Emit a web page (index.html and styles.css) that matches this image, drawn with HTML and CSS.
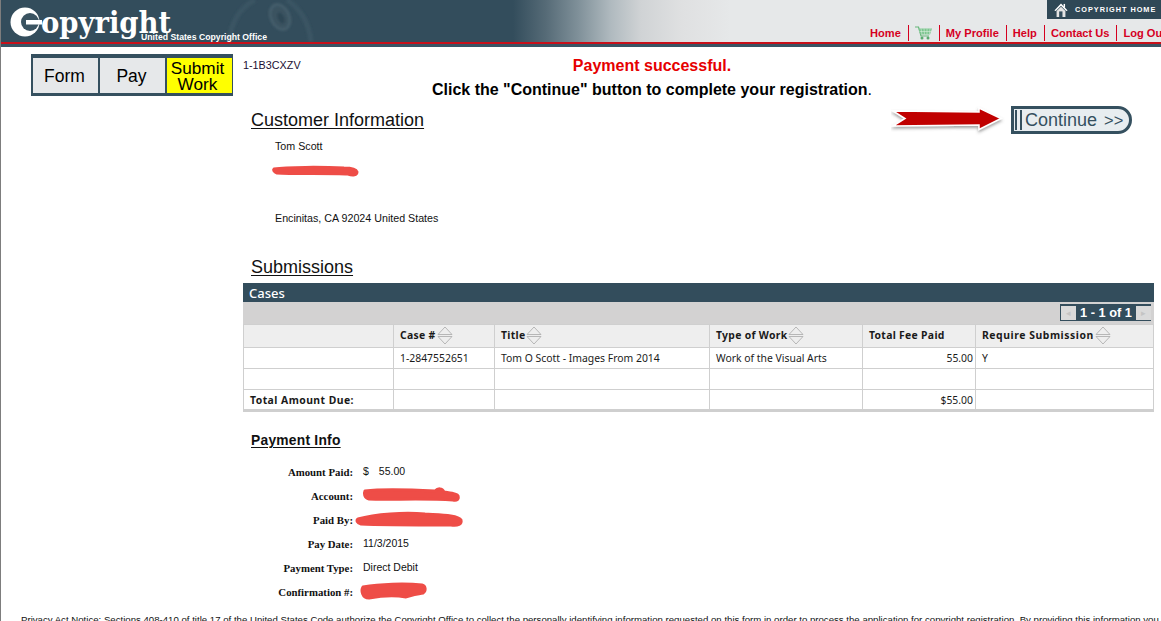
FILE: index.html
```html
<!DOCTYPE html>
<html lang="en">
<head>
<meta charset="utf-8">
<title>Copyright Registration</title>
<link rel="stylesheet" href="styles.css">
</head>
<body>
<header class="site-header">
  <div class="header-band">
    <svg class="ornament" width="90" height="42" viewBox="0 0 90 42" aria-hidden="true">
      <defs><filter id="soft"><feGaussianBlur stdDeviation="1"/></filter></defs>
      <g filter="url(#soft)">
        <path d="M4 42C6 24 14 8 30 0M62 0C74 8 84 22 86 42" fill="none" stroke="#3b5563" stroke-width="5"/>
        <ellipse cx="55" cy="17" rx="9" ry="13" fill="#3a5361" stroke="#445d6b" stroke-width="3" transform="rotate(-25 55 17)"/>
        <ellipse cx="56" cy="18" rx="3" ry="6" fill="#2f4755" transform="rotate(-25 56 18)"/>
      </g>
    </svg>
    <div class="brand">
      <div class="brand-mark">
        <svg class="brand-c" width="32" height="30" viewBox="0 0 32 30" role="img" aria-label="C">
          <circle cx="15" cy="15" r="14.5" fill="#fff"/>
          <circle cx="20" cy="15" r="9" fill="#3a5361"/>
          <rect x="16" y="13" width="16" height="4.5" fill="#fff"/>
        </svg>
        <span class="brand-word">opyright</span>
      </div>
      <div class="brand-sub">United States Copyright Office</div>
    </div>
    <div class="header-tools">
      <a class="home-box">
        <svg width="14" height="14" viewBox="0 0 19 15" preserveAspectRatio="none" aria-hidden="true">
          <path d="M0.5 8L9.5 0.5L18.5 8L16.5 8.5L9.5 3L2.5 8.5Z" fill="#fff"/>
          <path d="M3.5 8.5L9.5 4L15.5 8.5V15H3.5Z" fill="#e4e4e4"/>
          <rect x="7" y="9" width="4.5" height="6" fill="#334d5c"/>
          <rect x="13" y="1" width="2" height="4" fill="#fff"/>
        </svg>
        <span>COPYRIGHT HOME</span>
      </a>
      <nav class="top-nav">
        <a class="nav-item">Home</a>
        <a class="nav-item cart" aria-label="Cart">
          <svg width="17" height="14" viewBox="0 0 17 14" aria-hidden="true">
            <path d="M0 1H3.5L6 10H14" fill="none" stroke="#66b67a" stroke-width="1.2"/>
            <path d="M3.5 2.5H17L15 8.5H5.5Z" fill="#7cc58f"/>
            <path d="M6 2.5L7 8.5M9 2.5L9.5 8.5M12 2.5L12 8.5M15 2.5L14.5 8.5M4.5 5.5H16" stroke="#d6efdc" stroke-width=".6"/>
            <circle cx="7" cy="12" r="1.5" fill="#58ab6e"/>
            <circle cx="13" cy="12" r="1.5" fill="#58ab6e"/>
          </svg>
        </a>
        <a class="nav-item">My Profile</a>
        <a class="nav-item">Help</a>
        <a class="nav-item">Contact Us</a>
        <a class="nav-item">Log Out</a>
      </nav>
    </div>
  </div>
  <div class="header-rule"></div>
  <div class="header-strip"></div>
</header>

<div class="layout">
  <aside class="sidebar">
    <div class="tabs">
      <div class="tab">Form</div>
      <div class="tab">Pay</div>
      <div class="tab tab-active">Submit Work</div>
    </div>
  </aside>
  <main class="main">
    <div class="top-row">
      <div class="record-id">1-1B3CXZV</div>
      <div class="messages">
        <p class="msg-success">Payment successful.</p>
        <p class="msg-next"><strong>Click the "Continue" button to complete your registration</strong>.</p>
      </div>
    </div>
    <div class="customer-row">
      <h2 class="section-title">Customer Information</h2>
      <div class="continue-group">
        <svg class="big-arrow" width="114" height="30" viewBox="0 0 114 30" aria-hidden="true">
          <defs>
            <filter id="arrow-shadow" x="-5%" y="-20%" width="110%" height="150%">
              <feDropShadow dx="0" dy="2" stdDeviation="1.5" flood-color="#555" flood-opacity=".55"/>
            </filter>
          </defs>
          <path d="M2 5L88 6V2L110 12.5L88 23.500V19L2 20L14 12.5Z" fill="#c00000" stroke="#fff" stroke-width="1.5" filter="url(#arrow-shadow)"/>
        </svg>
        <button class="continue-btn" type="button"><span class="bars"></span><span>Continue</span><span class="chev">&gt;&gt;</span></button>
      </div>
    </div>
    <div class="customer-info">
      <div class="info-line">Tom Scott</div>
      <svg class="redact redact-address" width="88" height="12" viewBox="0 0 88 12" aria-hidden="true">
        <path d="M2 4C15 2 50 2 72 3C80 3 84 4 85 7C85 10 81 11 76 9C60 8 20 9 5 8C2 7 1 5 2 4Z"/>
      </svg>
      <div class="info-line info-city">Encinitas, CA 92024 United States</div>
    </div>
    <h2 class="section-title submissions">Submissions</h2>

    <section class="cases">
      <div class="cases-title">Cases</div>
      <div class="cases-toolbar">
        <div class="pager">
          <span class="page-btn">&#9666;</span>
          <span class="page-text">1 - 1 of 1</span>
          <span class="page-btn">&#9656;</span>
        </div>
      </div>
      <table class="cases-table">
        <colgroup>
          <col class="c1"><col class="c2"><col class="c3"><col class="c4"><col class="c5"><col class="c6">
        </colgroup>
        <thead>
          <tr>
            <th></th>
            <th>Case #<svg class="sort" viewBox="0 0 16 19" aria-hidden="true"><path d="M1 8.500L8 1L15 8.500Z M1 10.500L8 18L15 10.500Z"/></svg></th>
            <th>Title<svg class="sort" viewBox="0 0 16 19" aria-hidden="true"><path d="M1 8.500L8 1L15 8.500Z M1 10.500L8 18L15 10.500Z"/></svg></th>
            <th>Type of Work<svg class="sort" viewBox="0 0 16 19" aria-hidden="true"><path d="M1 8.500L8 1L15 8.500Z M1 10.500L8 18L15 10.500Z"/></svg></th>
            <th>Total Fee Paid</th>
            <th class="wide-head">Require Submission<svg class="sort" viewBox="0 0 16 19" aria-hidden="true"><path d="M1 8.500L8 1L15 8.500Z M1 10.500L8 18L15 10.500Z"/></svg></th>
          </tr>
        </thead>
        <tbody>
          <tr>
            <td></td><td>1-2847552651</td><td>Tom O Scott - Images From 2014</td><td>Work of the Visual Arts</td><td class="num">55.00</td><td>Y</td>
          </tr>
          <tr><td></td><td></td><td></td><td></td><td></td><td></td></tr>
          <tr class="total-row">
            <td class="total-label">Total Amount Due:</td><td></td><td></td><td></td><td class="num">$55.00</td><td></td>
          </tr>
        </tbody>
      </table>
    </section>

    <h3 class="payment-title">Payment Info</h3>
    <dl class="payment">
      <div class="pay-row"><dt>Amount Paid:</dt><dd><span class="currency">$</span>55.00</dd></div>
      <div class="pay-row"><dt>Account:</dt><dd>
        <svg class="redact" width="97" height="16" viewBox="0 0 97 16" aria-hidden="true"><path d="M2 4C20 2 50 3 72 4C75 1 79 1 81 5C88 6 95 7 95 9C96 12 94 14 90 13C60 11 25 13 6 12C1 11 1 6 2 4Z"/></svg>
      </dd></div>
      <div class="pay-row"><dt>Paid By:</dt><dd>
        <svg class="redact redact-paid" width="109" height="19" viewBox="0 0 109 19" aria-hidden="true"><path d="M3 9C20 4 50 2 70 4C85 5 103 5 106 10C107 14 103 16 96 15C70 15 25 15 6 14C2 13 1 10 3 9Z"/></svg>
      </dd></div>
      <div class="pay-row"><dt>Pay Date:</dt><dd>11/3/2015</dd></div>
      <div class="pay-row"><dt>Payment Type:</dt><dd>Direct Debit</dd></div>
      <div class="pay-row"><dt>Confirmation #:</dt><dd>
        <svg class="redact redact-conf" width="68" height="18" viewBox="0 0 68 18" aria-hidden="true"><path d="M3 5C20 2 45 1 62 3C66 4 66 9 63 11C58 12 50 13 46 15C35 13 20 14 9 16C2 16 1 8 3 5Z"/></svg>
      </dd></div>
    </dl>
  </main>
</div>
<footer class="notice">Privacy Act Notice: Sections 408-410 of title 17 of the United States Code authorize the Copyright Office to collect the personally identifying information requested on this form in order to process the application for copyright registration. By providing this information you</footer>
</body>
</html>
```

FILE: styles.css
```css
* { box-sizing: border-box; }
html, body { margin: 0; padding: 0; height: 100%; overflow: hidden; background: #fff; }
body {
  border-left: 1px solid #7d7d7d;
  font-family: "Liberation Sans", Arial, sans-serif;
  color: #111;
  font-size: 10.5px;
}
p, h2, h3, dl, dd { margin: 0; }

/* Header */
.site-header { width: 100%; }
.header-band {
  position: relative;
  height: 42px;
  display: flex;
  justify-content: space-between;
  background: linear-gradient(90deg, #334d5c 512px, #566b77 545px, #7f9099 577px, #b0babf 610px, #d0d3d5 640px, #dfe0e1 680px, #e6e8e9 730px);
}
.ornament { position: absolute; left: 224px; top: 0; }
.brand { position: relative; padding: 9px 0 0 9px; }
.brand-mark { display: flex; align-items: flex-start; height: 23px; }
.brand-c { margin-top: -2px; flex: none; }
.brand-word {
  font-family: "DejaVu Serif Condensed", "DejaVu Serif", serif;
  font-weight: 700;
  font-size: 30.5px;
  line-height: 23px;
  color: #fff;
  margin: 2px 0 0 -1px;
}
.brand-sub {
  margin-left: 131px;
  font-family: "Liberation Sans", sans-serif;
  font-weight: 700;
  font-size: 8.7px;
  line-height: 10px;
  color: #fff;
  white-space: nowrap;
}
.header-tools {
  width: 291px;
  display: flex;
  flex-direction: column;
  align-items: flex-end;
  overflow: hidden;
}
.home-box {
  width: 114px;
  height: 19px;
  background: #2f4856;
  color: #fff;
  display: flex;
  align-items: center;
  gap: 7px;
  padding-left: 7px;
  white-space: nowrap;
  font-size: 7.3px;
  font-weight: 700;
  letter-spacing: 1px;
}
.top-nav {
  width: 291px;
  height: 16px;
  margin-top: 6px;
  display: flex;
  align-items: center;
  white-space: nowrap;
}
.nav-item {
  color: #d5001f;
  font-size: 11.1px;
  font-weight: 700;
  line-height: 16px;
  height: 16px;
  padding: 0 7px 0 6px;
  border-right: 1px solid #d5001f;
}
.nav-item:first-child { padding-left: 0; }
.nav-item:last-child { border-right: 0; }
.nav-item.cart { display: flex; align-items: center; padding: 0 7px 0 6px; }
.header-rule { height: 2px; background: #c8101a; }
.header-strip { height: 3px; background: #3a5464; }

/* Layout */
.layout { display: flex; align-items: flex-start; }
.sidebar { width: 242px; flex: none; padding: 7px 0 0 30px; }
.tabs {
  width: 202px;
  height: 42px;
  display: flex;
  gap: 2px;
  padding: 4px 1px 3px 2px;
  background: #35505f;
}
.tab {
  width: 65px;
  background: #e6e8ea;
  display: flex;
  align-items: center;
  justify-content: center;
  text-align: center;
  font-size: 17.5px;
  line-height: 16px;
  color: #000;
  padding-right: 2px;
}
.tab-active { background: #ff0; padding: 0 6px 0 2px; font-size: 17.2px; }
.main { width: 911px; flex: none; }

.top-row { display: flex; padding-top: 9px; }
.record-id { width: 58px; padding-top: 2px; font-size: 10.8px; line-height: 14px; color: #1c0f33; white-space: nowrap; }
.messages { width: 702px; text-align: center; font-size: 16px; line-height: 20px; }
.msg-success { color: #e60000; font-weight: 700; }
.msg-next { margin-top: 4px; color: #000; white-space: nowrap; }

.customer-row {
  height: 28px;
  margin-top: 6px;
  padding: 0 22px 0 8px;
  display: flex;
  align-items: center;
  justify-content: space-between;
}
.section-title {
  font-size: 18px;
  font-weight: 400;
  line-height: 24px;
  color: #111;
  text-decoration: underline;
  text-underline-offset: 2px;
  white-space: nowrap;
}
.continue-group { display: flex; align-items: center; gap: 6px; }
.big-arrow { margin-top: 1px; }
.continue-btn {
  width: 121px;
  height: 28px;
  padding: 0;
  display: flex;
  align-items: center;
  border: 3px solid #35505f;
  border-radius: 0 14px 14px 0;
  background: #e8edf0;
  color: #35505f;
  font-family: "Liberation Sans", Arial, sans-serif;
  font-size: 18px;
}
.bars {
  width: 7px;
  height: 20px;
  margin: 0 3px 0 1px;
  border-left: 2px solid #35505f;
  border-right: 2px solid #35505f;
  flex: none;
}
.chev { font-size: 16.5px; margin-left: 7px; }

.customer-info { padding: 5px 0 0 32px; font-size: 10.7px; }
.info-line { line-height: 14px; }
.redact { display: block; fill: #ee4d47; stroke: #ee4d47; stroke-width: 3; stroke-linejoin: round; overflow: visible; }
.redact-address { margin: 12px 0 0 -3px; }
.info-city { margin-top: 34px; }
.submissions { margin: 30px 0 0 8px; }

/* Cases */
.cases { margin-top: 4px; width: 911px; }
.cases-title {
  height: 19px;
  padding-left: 6px;
  background: #334d5c;
  color: #fff;
  font-family: "Noto Sans", sans-serif;
  font-size: 13px;
  font-weight: 500;
  line-height: 20px;
}
.cases-toolbar {
  height: 22px;
  padding: 2px 3px 3px 0;
  background: #d3d2d2;
  display: flex;
  justify-content: flex-end;
}
.pager {
  width: 91px;
  display: flex;
  align-items: center;
  justify-content: space-between;
  padding: 0 0 0 1px;
  background: #334d5c;
  color: #fff;
}
.page-btn {
  width: 15px;
  height: 14px;
  background: #dadada;
  color: #c4c4c4;
  font-size: 9px;
  line-height: 14px;
  text-align: center;
}
.page-text { font-size: 12.8px; font-weight: 700; line-height: 17px; white-space: nowrap; }

.cases-table {
  width: 910px;
  table-layout: fixed;
  border-collapse: collapse;
  font-family: "Noto Sans", sans-serif;
  font-size: 10.4px;
  color: #1a1a1a;
  border-bottom: 3px solid #cfcfcf;
}
.c1 { width: 150px; } .c2 { width: 101px; } .c3 { width: 215px; }
.c4 { width: 153px; } .c5 { width: 113px; } .c6 { width: 178px; }
.cases-table th, .cases-table td {
  border: 1px solid #cfcfcf;
  padding: 0 6px;
  height: 21px;
  white-space: nowrap;
  text-align: left;
  overflow: visible;
}
.cases-table th {
  height: 23px;
  padding-bottom: 2px;
  background: #eeeeee;
  font-weight: 700;
  letter-spacing: .3px;
}
.cases-table .wide-head { letter-spacing: .55px; }
.sort {
  display: inline-block;
  width: 16px;
  height: 19px;
  vertical-align: middle;
  margin: -5px 0 -4px 1px;
  fill: none;
  stroke: #a8a8a8;
  stroke-width: .8;
}
.cases-table .num { text-align: right; padding-right: 2px; }
.cases-table .total-label { font-weight: 700; letter-spacing: .45px; }

/* Payment */
.payment-title {
  margin: 20px 0 0 8px;
  font-size: 13.8px;
  font-weight: 700;
  line-height: 18px;
  color: #111;
  text-decoration: underline;
  text-underline-offset: 2px;
  letter-spacing: .25px;
}
.payment { margin-top: 9px; }
.pay-row { display: flex; align-items: center; height: 24px; }
.pay-row dt {
  width: 110px;
  text-align: right;
  font-family: "Liberation Serif", serif;
  font-weight: 700;
  font-size: 10.8px;
  padding-top: 1px;
}
.pay-row dd { position: relative; margin-left: 10px; line-height: 14px; }
.currency { margin-right: 10px; }
.redact-paid { margin-left: -8px; }
.redact-conf { margin-left: -3px; }

.notice {
  margin-top: 10px;
  padding-left: 20px;
  line-height: 14px;
  font-size: 9.63px;
  white-space: nowrap;
  color: #111;
}
```
